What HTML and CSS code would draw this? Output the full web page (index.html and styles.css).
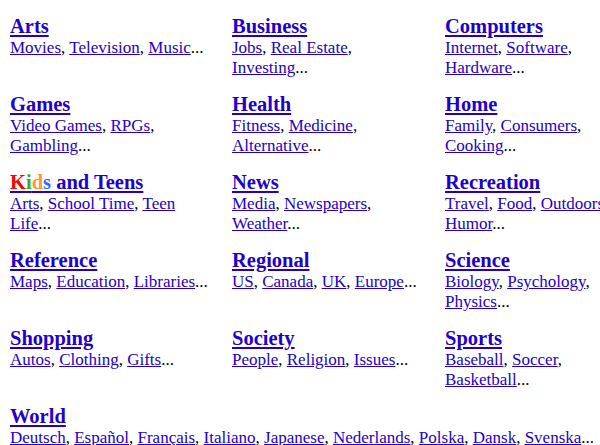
FILE: index.html
```html
<!DOCTYPE html>
<html>
<head>
<meta charset="utf-8">
<link rel="stylesheet" href="styles.css">
</head>
<body>
<div class="dir">
  <div class="cat c1">
    <a class="head" href="#">Arts</a>
    <div class="line"><a href="#">Movies</a>, <a href="#">Television</a>, <a href="#">Music</a>...</div>
  </div>
  <div class="cat c2">
    <a class="head" href="#">Business</a>
    <div class="line"><a href="#">Jobs</a>, <a href="#">Real Estate</a>,</div>
    <div class="line"><a href="#">Investing</a>...</div>
  </div>
  <div class="cat c3">
    <a class="head" href="#">Computers</a>
    <div class="line"><a href="#">Internet</a>, <a href="#">Software</a>,</div>
    <div class="line"><a href="#">Hardware</a>...</div>
  </div>

  <div class="cat c1">
    <a class="head" href="#">Games</a>
    <div class="line"><a href="#">Video Games</a>, <a href="#">RPGs</a>,</div>
    <div class="line"><a href="#">Gambling</a>...</div>
  </div>
  <div class="cat c2">
    <a class="head" href="#">Health</a>
    <div class="line"><a href="#">Fitness</a>, <a href="#">Medicine</a>,</div>
    <div class="line"><a href="#">Alternative</a>...</div>
  </div>
  <div class="cat c3">
    <a class="head" href="#">Home</a>
    <div class="line"><a href="#">Family</a>, <a href="#">Consumers</a>,</div>
    <div class="line"><a href="#">Cooking</a>...</div>
  </div>

  <div class="cat c1">
    <a class="head" href="#"><span class="k1">K</span><span class="k2">i</span><span class="k3">d</span><span class="k4">s</span> and Teens</a>
    <div class="line"><a href="#">Arts</a>, <a href="#">School Time</a>, <a href="#">Teen</a></div>
    <div class="line"><a href="#">Life</a>...</div>
  </div>
  <div class="cat c2">
    <a class="head" href="#">News</a>
    <div class="line"><a href="#">Media</a>, <a href="#">Newspapers</a>,</div>
    <div class="line"><a href="#">Weather</a>...</div>
  </div>
  <div class="cat c3">
    <a class="head" href="#">Recreation</a>
    <div class="line"><a href="#">Travel</a>, <a href="#">Food</a>, <a href="#">Outdoors</a>,</div>
    <div class="line"><a href="#">Humor</a>...</div>
  </div>

  <div class="cat c1">
    <a class="head" href="#">Reference</a>
    <div class="line"><a href="#">Maps</a>, <a href="#">Education</a>, <a href="#">Libraries</a>...</div>
  </div>
  <div class="cat c2">
    <a class="head" href="#">Regional</a>
    <div class="line"><a href="#">US</a>, <a href="#">Canada</a>, <a href="#">UK</a>, <a href="#">Europe</a>...</div>
  </div>
  <div class="cat c3">
    <a class="head" href="#">Science</a>
    <div class="line"><a href="#">Biology</a>, <a href="#">Psychology</a>,</div>
    <div class="line"><a href="#">Physics</a>...</div>
  </div>

  <div class="cat c1">
    <a class="head" href="#">Shopping</a>
    <div class="line"><a href="#">Autos</a>, <a href="#">Clothing</a>, <a href="#">Gifts</a>...</div>
  </div>
  <div class="cat c2">
    <a class="head" href="#">Society</a>
    <div class="line"><a href="#">People</a>, <a href="#">Religion</a>, <a href="#">Issues</a>...</div>
  </div>
  <div class="cat c3">
    <a class="head" href="#">Sports</a>
    <div class="line"><a href="#">Baseball</a>, <a href="#">Soccer</a>,</div>
    <div class="line"><a href="#">Basketball</a>...</div>
  </div>

  <div class="cat wide">
    <a class="head" href="#">World</a>
    <div class="line"><a href="#">Deutsch</a>, <a href="#">Español</a>, <a href="#">Français</a>, <a href="#">Italiano</a>, <a href="#">Japanese</a>, <a href="#">Nederlands</a>, <a href="#">Polska</a>, <a href="#">Dansk</a>, <a href="#">Svenska</a>...</div>
  </div>
</div>
</body>
</html>
```

FILE: styles.css
```css
html {
  overflow: hidden;
}
body {
  margin: 0;
  padding: 15px 0 0 10px;
  background: #ffffff;
  color: #000000;
  font-family: "Liberation Serif", "Times New Roman", serif;
  font-size: 17px;
}
a {
  color: #2200cc;
  text-decoration: underline;
}
.dir {
  display: grid;
  grid-template-columns: 222px 213px 200px;
  grid-auto-rows: 78px;
  width: 635px;
}
.cat {
  display: flex;
  flex-direction: column;
  align-items: flex-start;
  white-space: nowrap;
}
.wide {
  grid-column: 1 / 4;
}
.head {
  font-size: 20.5px;
  font-weight: bold;
  line-height: 23px;
}
.line {
  line-height: 20px;
}
.k1 { color: #ff0000; }
.k2 { color: #33aa33; }
.k3 { color: #ff9933; }
.k4 { color: #3366ff; }
```
